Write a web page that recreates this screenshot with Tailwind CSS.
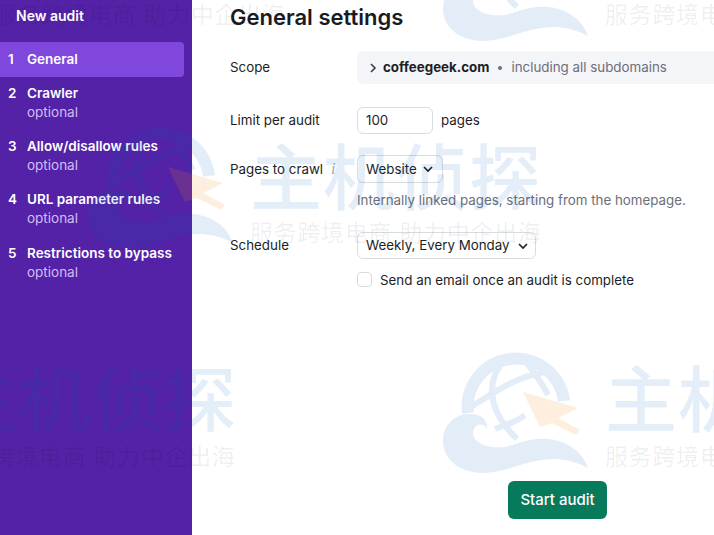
<!DOCTYPE html>
<html lang="en">
  <head>
    <meta charset="UTF-8" />
    <title>New audit</title>
    <script src="https://cdn.jsdelivr.net/npm/@tailwindcss/browser@4"></script>
  </head>
  <body class="font-['Inter','Noto_Sans_CJK_SC',sans-serif]">
    <div class="relative flex w-[714px] h-[535px] overflow-hidden bg-white">
      <!-- sidebar -->
      <aside class="w-[192px] shrink-0 bg-[#5322a6] text-white">
        <div class="h-[42px] pl-[16px] pt-[6px] text-[14px] leading-[19px] font-semibold">New audit</div>
        <div class="w-[184px] h-[35px] rounded-r-[4px] bg-[#7f47dc] flex items-center pl-[8px] text-[13.5px] font-semibold">
          <span class="w-[19px]">1</span><span>General</span>
        </div>
        <div class="mt-[7px] flex flex-col gap-[15px] pl-[8px] text-[13.5px] leading-[19px]">
          <div class="flex">
            <span class="w-[19px] font-semibold">2</span>
            <div><div class="font-semibold">Crawler</div><div class="text-[#d3bdf5]">optional</div></div>
          </div>
          <div class="flex">
            <span class="w-[19px] font-semibold">3</span>
            <div><div class="font-semibold">Allow/disallow rules</div><div class="text-[#d3bdf5]">optional</div></div>
          </div>
          <div class="flex">
            <span class="w-[19px] font-semibold">4</span>
            <div><div class="font-semibold">URL parameter rules</div><div class="text-[#d3bdf5]">optional</div></div>
          </div>
          <div class="flex mt-[0.6px]">
            <span class="w-[19px] font-semibold">5</span>
            <div><div class="font-semibold">Restrictions to bypass</div><div class="text-[#d3bdf5]">optional</div></div>
          </div>
        </div>
      </aside>

      <!-- settings -->
      <main class="flex-1 flex flex-col pl-[38px] text-[13.35px] text-[#1c1e26]">
        <h1 class="h-[51px] pt-[3px] text-[22px] leading-[28px] font-semibold text-[#1a1b22]">General settings</h1>

        <div class="flex items-center h-[33px]">
          <div class="w-[127px]">Scope</div>
          <div class="flex-1 h-full flex items-center pl-[12px] rounded-l-[6px] bg-[#f4f5f9]">
            <svg class="w-[8px] h-[10px] mr-[6px]" viewBox="0 0 8 10" fill="none" stroke="#3a3d48" stroke-width="1.6"><path d="M2 1l4 4-4 4"/></svg>
            <span class="font-bold">coffeegeek.com</span>
            <span class="w-[4px] h-[4px] rounded-full bg-[#6c6e79] mx-[9px]"></span>
            <span class="text-[#6c6e79]">including all subdomains</span>
          </div>
        </div>

        <div class="flex items-center h-[27px] mt-[23px]">
          <div class="w-[127px]">Limit per audit</div>
          <div class="w-[76px] h-full flex items-center pl-[8px] rounded-[6px] border border-[#d9dbe3] bg-white">100</div>
          <span class="ml-[8px]">pages</span>
        </div>

        <div class="flex items-center h-[28px] mt-[21px]">
          <div class="w-[127px] flex items-center">Pages to crawl<span class="ml-[8px] font-['Liberation_Serif',serif] italic text-[16px] text-[#a4a7b3]">i</span></div>
          <div class="w-[86px] h-full flex items-center pl-[8px] rounded-[6px] border border-[#d9dbe3]">
            Website
            <svg class="w-[10px] h-[8px] ml-[6px]" viewBox="0 0 10 8" fill="none" stroke="#1c1e26" stroke-width="1.6"><path d="M1 2l4 4 4-4"/></svg>
          </div>
        </div>
        <div class="mt-[9px] ml-[127px] leading-[17px] text-[#6c6e79]">Internally linked pages, starting from the homepage.</div>

        <div class="flex items-center h-[27px] mt-[23px]">
          <div class="w-[127px]">Schedule</div>
          <div class="w-[179px] h-full flex items-center pl-[8px] rounded-[6px] border border-[#d9dbe3]">
            Weekly, Every Monday
            <svg class="w-[10px] h-[8px] ml-[8px]" viewBox="0 0 10 8" fill="none" stroke="#1c1e26" stroke-width="1.6"><path d="M1 2l4 4 4-4"/></svg>
          </div>
        </div>
        <div class="flex items-center mt-[12px] ml-[127px] h-[17px]">
          <span class="w-[15px] h-[15px] rounded-[4px] border border-[#d9dbe3] bg-white"></span>
          <span class="ml-[8px]">Send an email once an audit is complete</span>
        </div>

        <div class="mt-auto mb-[16px] ml-[278px] w-[99px] h-[38px] flex items-center justify-center rounded-[6px] bg-[#087a5c] text-white text-[15px] font-medium">Start audit</div>
      </main>

      <!-- watermark -->
      <svg class="hidden">
        <symbol id="wm-logo" viewBox="0 0 155 135">
          <g fill="none" stroke="#0a64be" stroke-width="6">
            <path stroke-width="12" d="M28 68A48 48 0 1 1 124 56" />
            <path d="M67 12C47 32 44 62 77 94" />
            <path d="M82 12C92 24 102 38 108 50" />
            <path d="M30 62C50 52 70 32 110 26" />
            <path d="M55 84C65 80 75 78 85 70" />
          </g>
          <path fill="#0a64be" d="M148 123C140 100 115 90 90 95C75 98 68 104 52 102C38 100 30 92 34 84C36 78 45 78 47 84C48 74 40 68 28 69C12 70 3 82 3 96C3 116 22 128 43 128C75 128 105 100 148 123Z" />
        </symbol>
      </svg>
      <div class="absolute inset-0 pointer-events-none">
        <svg class="absolute left-[440px] top-[345px] w-[155px] h-[135px] opacity-[.11]"><use href="#wm-logo" /></svg>
        <svg class="absolute left-[85px] top-[120px] w-[155px] h-[135px] opacity-[.11]"><use href="#wm-logo" /></svg>
        <svg class="absolute left-[440px] top-[-87px] w-[155px] h-[135px] opacity-[.11]"><use href="#wm-logo" /></svg>

        <svg class="absolute left-[523px] top-[392px] w-[57px] h-[44px] opacity-[.14]" viewBox="0 0 57 44" fill="#f58c1e"><path d="M0 0L55 16L35 26L57 38L53 43L29 31L17 35Z" /></svg>
        <svg class="absolute left-[168px] top-[167px] w-[57px] h-[44px] opacity-[.14]" viewBox="0 0 57 44" fill="#f58c1e"><path d="M0 0L55 16L35 26L57 38L53 43L29 31L17 35Z" /></svg>

        <span class="absolute left-[605px] top-[355px] text-[72px] leading-[90px] font-medium tracking-[1px] whitespace-nowrap text-[#0a64be]/[.11]">主机侦探</span>
        <span class="absolute left-[250px] top-[133px] text-[72px] leading-[90px] font-medium tracking-[1px] whitespace-nowrap text-[#0a64be]/[.11]">主机侦探</span>
        <span class="absolute left-[-55px] top-[355px] text-[72px] leading-[90px] font-medium tracking-[1px] whitespace-nowrap text-[#0a64be]/[.11]">主机侦探</span>

        <span class="absolute left-[605px] top-[442px] text-[23px] leading-[30px] tracking-[.7px] whitespace-nowrap text-black/[.07]">服务跨境电商 助力中企出海</span>
        <span class="absolute left-[250px] top-[218px] text-[23px] leading-[30px] tracking-[.7px] whitespace-nowrap text-black/[.07]">服务跨境电商 助力中企出海</span>
        <span class="absolute left-[605px] top-[0px] text-[23px] leading-[30px] tracking-[.7px] whitespace-nowrap text-black/[.07]">服务跨境电商 助力中企出海</span>
        <span class="absolute left-[-6px] top-[0px] text-[23px] leading-[30px] tracking-[.7px] whitespace-nowrap text-black/[.07]">服务跨境电商 助力中企出海</span>
        <span class="absolute left-[-56px] top-[442px] text-[23px] leading-[30px] tracking-[.7px] whitespace-nowrap text-black/[.07]">服务跨境电商 助力中企出海</span>
      </div>
    </div>
  </body>
</html>
